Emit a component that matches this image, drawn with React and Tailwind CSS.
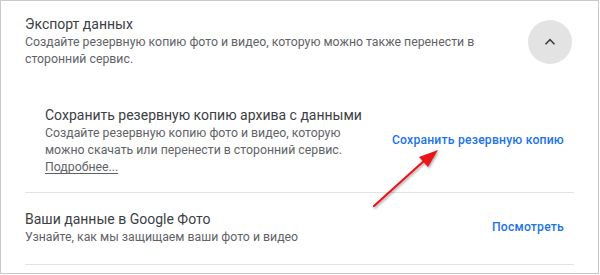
export default function App() {
  return (
    <div className="relative w-[600px] h-[275px] bg-white overflow-hidden" style={{ fontFamily: "Roboto, 'Noto Sans', sans-serif" }}>
      <div className="w-[599px] h-[274px] border border-[#c9c9c9] flex flex-col">
        {/* Export section */}
        <div className="flex items-start pl-[24px] pr-[26px] pt-[13px]">
          <div className="flex-1">
            <div className="text-[14px] leading-[20px] text-[#3c4043]">Экспорт данных</div>
            <div className="text-[12.3px] leading-[17px] text-[#5f6368] w-[460px]">
              Создайте резервную копию фото и видео, которую можно также перенести в сторонний сервис.
            </div>
          </div>
          <div className="mt-[6px] w-[44px] h-[44px] rounded-full bg-[#e3e3e3] flex items-center justify-center">
            <svg width="18" height="18" viewBox="0 0 24 24" fill="none" stroke="#3c4043" strokeWidth="2.2">
              <path d="M6 15l6-6 6 6" />
            </svg>
          </div>
        </div>

        {/* Backup subsection */}
        <div className="flex items-center pl-[44px] pr-[34px] mt-[37px]">
          <div className="flex-1">
            <div className="text-[14px] leading-[20px] text-[#3c4043] whitespace-nowrap">Сохранить резервную копию архива с данными</div>
            <div className="text-[12.3px] leading-[17px] text-[#5f6368] w-[310px]">
              Создайте резервную копию фото и видео, которую можно скачать или перенести в сторонний сервис.
            </div>
            <div className="text-[12.3px] leading-[17px] text-[#5f6368] underline underline-offset-2">Подробнее...</div>
          </div>
          <div className="text-[12.2px] font-medium tracking-[0.2px] text-[#1a73e8]">Сохранить резервную копию</div>
        </div>

        <div className="mx-[24px] mt-[16px] border-t border-[#e3e3e3]" />

        {/* Google Photos data */}
        <div className="flex items-center pl-[24px] pr-[34px] pt-[16px]">
          <div className="flex-1">
            <div className="text-[14px] leading-[20px] text-[#3c4043]">Ваши данные в Google Фото</div>
            <div className="text-[12.3px] leading-[17px] text-[#5f6368]">Узнайте, как мы защищаем ваши фото и видео</div>
          </div>
          <div className="text-[12.2px] font-medium tracking-[0.2px] text-[#1a73e8]">Посмотреть</div>
        </div>

        <div className="mx-[24px] mt-[18px] border-t border-[#e3e3e3]" />
      </div>

      {/* Red annotation arrow */}
      <svg className="absolute left-0 top-0 pointer-events-none" width="600" height="275" viewBox="0 0 600 275">
        <defs>
          <filter id="sh" x="-20%" y="-20%" width="140%" height="140%">
            <feDropShadow dx="1" dy="1.5" stdDeviation="1.2" floodColor="#000" floodOpacity="0.35" />
          </filter>
        </defs>
        <g filter="url(#sh)">
          <line x1="374" y1="206" x2="425" y2="160" stroke="#e8151b" strokeWidth="2.2" strokeLinecap="round" />
          <path d="M438 150 L419 157 L428 167 Z" fill="#e8151b" />
        </g>
      </svg>
    </div>
  );
}
